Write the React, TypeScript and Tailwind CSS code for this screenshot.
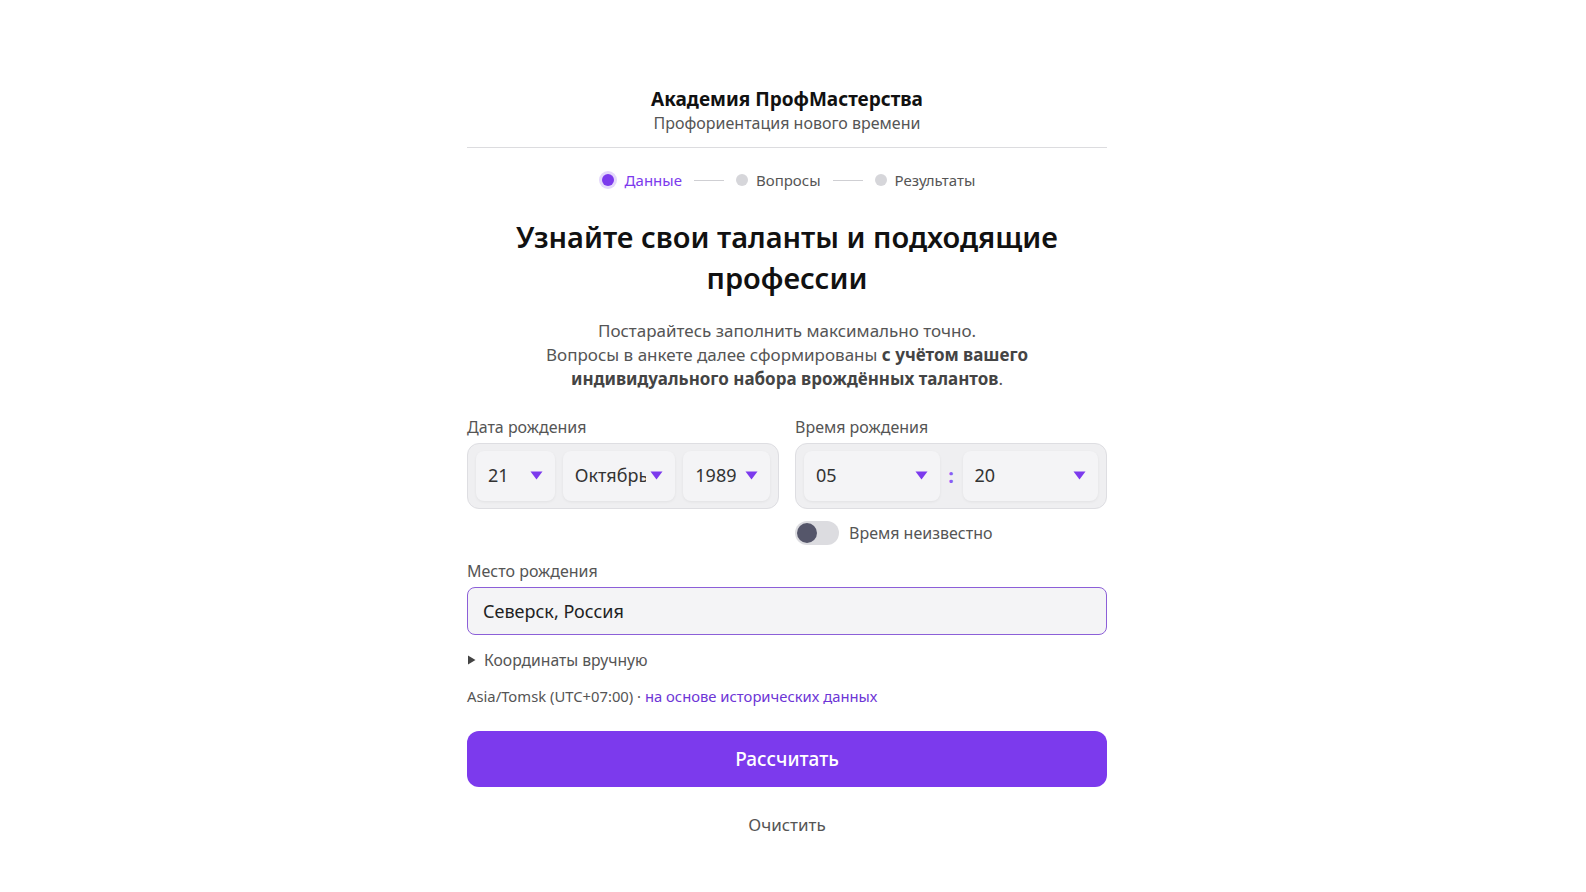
import React, { useState } from 'react';

const font = { fontFamily: '"Noto Sans", "Open Sans", sans-serif' };

function Caret() {
  return (
    <svg width="13" height="9" viewBox="0 0 13 9" className="shrink-0">
      <path d="M0.5 0.5 H12.5 L6.5 8.5 Z" fill="#7c3aed" />
    </svg>
  );
}

function SelectBox({ value, className }: { value: string; className?: string }) {
  return (
    <div
      className={
        'flex h-[50px] items-center justify-between gap-1 overflow-hidden rounded-lg bg-[#f4f4f6] pl-3 pr-3 text-[18px] text-[#333] shadow-[0_1px_3px_rgba(0,0,0,0.06)] ' +
        (className ?? '')
      }
    >
      <span className="overflow-hidden whitespace-nowrap">{value}</span>
      <Caret />
    </div>
  );
}

function Step({ label, active }: { label: string; active?: boolean }) {
  return (
    <div className="flex items-center gap-2">
      {active ? (
        <span className="h-[18px] w-[18px] rounded-full bg-[#e4d8fb] p-[3px]">
          <span className="block h-full w-full rounded-full bg-[#7c3aed]" />
        </span>
      ) : (
        <span className="h-[12px] w-[12px] rounded-full bg-[#d6d6da]" />
      )}
      <span className={active ? 'text-[#7c3aed]' : 'text-[#555]'}>{label}</span>
    </div>
  );
}

export default function App() {
  const [unknown, setUnknown] = useState(false);
  const [place, setPlace] = useState('Северск, Россия');

  return (
    <div className="min-h-screen bg-white pr-[12px]" style={font}>
      <div className="mx-auto flex w-[640px] flex-col pt-[86px]">
        <header className="flex flex-col items-center border-b border-[#dcdcdf] pb-[13px]">
          <h1 className="text-[19px] font-bold leading-[26px] text-[#111]">Академия ПрофМастерства</h1>
          <p className="text-[16px] leading-[22px] text-[#555]">Профориентация нового времени</p>
        </header>

        <nav className="mt-[21px] flex items-center justify-center gap-[12px] text-[15px]">
          <Step label="Данные" active />
          <span className="h-px w-[30px] bg-[#cfcfd3]" />
          <Step label="Вопросы" />
          <span className="h-px w-[30px] bg-[#cfcfd3]" />
          <Step label="Результаты" />
        </nav>

        <h2 className="mt-[24px] text-center text-[29px] font-semibold leading-[41px] text-[#111]">
          Узнайте свои таланты и подходящие
          <br />
          профессии
        </h2>

        <p className="mt-[21px] text-center text-[17px] leading-[24px] text-[#555]">
          Постарайтесь заполнить максимально точно.
          <br />
          Вопросы в анкете далее сформированы <b className="font-bold text-[#444]">с учётом вашего</b>
          <br />
          <b className="font-bold text-[#444]">индивидуального набора врождённых талантов</b>.
        </p>

        <div className="mt-[25px] grid grid-cols-2 gap-4">
          <div className="flex flex-col">
            <label className="mb-[5px] text-[16px] leading-[22px] text-[#555]">Дата рождения</label>
            <div className="flex h-[66px] items-center gap-2 rounded-xl border border-[#dedee2] bg-[#efeff1] px-2">
              <SelectBox value="21" className="w-[79px]" />
              <SelectBox value="Октябрь" className="w-[113px]" />
              <SelectBox value="1989" className="w-[87px]" />
            </div>
          </div>
          <div className="flex flex-col">
            <label className="mb-[5px] text-[16px] leading-[22px] text-[#555]">Время рождения</label>
            <div className="flex h-[66px] items-center rounded-xl border border-[#dedee2] bg-[#efeff1] px-2">
              <SelectBox value="05" className="flex-1" />
              <span className="w-[23px] text-center text-[20px] font-bold text-[#8b5cf6]">:</span>
              <SelectBox value="20" className="flex-1" />
            </div>
            <button
              type="button"
              onClick={() => setUnknown(!unknown)}
              className="mt-[12px] flex items-center gap-[10px] text-left"
            >
              <span
                className={
                  'flex h-[24px] w-[44px] items-center rounded-full p-[2px] ' +
                  (unknown ? 'justify-end bg-[#7c3aed]' : 'bg-[#dcdce0]')
                }
              >
                <span className="h-[20px] w-[20px] rounded-full bg-[#55566a]" />
              </span>
              <span className="text-[16px] text-[#555]">Время неизвестно</span>
            </button>
          </div>
        </div>

        <label className="mt-[15px] mb-[5px] text-[16px] leading-[22px] text-[#555]">Место рождения</label>
        <input
          value={place}
          onChange={(e) => setPlace(e.target.value)}
          className="h-[48px] rounded-lg border-[1.5px] border-[#8c5fd8] bg-[#f4f4f6] px-[15px] text-[18px] text-[#222] outline-none"
        />

        <div className="mt-[14px] flex items-center gap-2 text-[15.7px] text-[#555]">
          <svg width="9" height="10" viewBox="0 0 9 10">
            <path d="M1 0.5 L8.5 5 L1 9.5 Z" fill="#444" />
          </svg>
          Координаты вручную
        </div>

        <div className="mt-[13px] text-[14.8px] text-[#555]">
          Asia/Tomsk (UTC+07:00) · <span className="text-[#6d35d6]">на основе исторических данных</span>
        </div>

        <button
          type="button"
          className="mt-[24px] h-[56px] rounded-xl bg-[#7c3aed] text-[19px] font-medium text-white"
        >
          Рассчитать
        </button>

        <button type="button" className="mt-[25px] self-center text-[17px] text-[#555]">
          Очистить
        </button>
      </div>
    </div>
  );
}
